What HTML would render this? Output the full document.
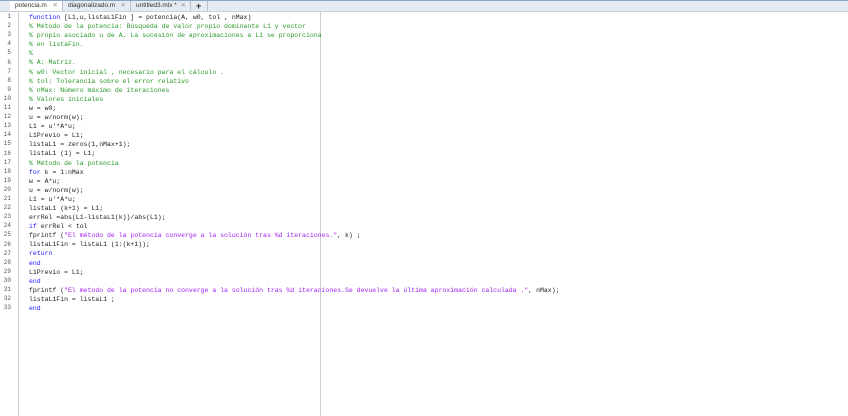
<!DOCTYPE html>
<html><head><meta charset="utf-8"><style>
body{margin:0;width:848px;height:416px;background:#fff;overflow:hidden;position:relative;font-family:"Liberation Mono",monospace}
.tabs{position:absolute;top:0;left:0;width:848px;height:10px;background:#e6ebf2;border-top:1px solid #8aa4c8;border-bottom:1px solid #c9d3df;font-family:"Liberation Sans",sans-serif;font-size:6.5px;color:#333}
.tab{position:absolute;top:0;height:10px;line-height:10px;padding-left:5px;border-right:1px solid #b8c2cf;box-sizing:border-box}
.tab .x{position:absolute;right:4px;color:#999}
.tab.a{background:#fff}
.gut{position:absolute;top:12px;left:0;width:18px;height:404px;border-right:1px solid #ccc}
.ln{position:absolute;left:0;width:11px;text-align:right;font-size:6px;color:#555}
.code{position:absolute;left:29px;top:13px;font-size:6.5px;line-height:9.1px;white-space:pre;color:#222}
.c{color:#2a9a2a}.k{color:#1a1aff}.s{color:#a020f0}
.marg{position:absolute;left:320px;top:12px;width:1px;height:404px;background:#d0d0d0}
</style></head><body>
<div class="tabs">
<div class="tab a" style="left:10px;width:53px">potencia.m<span class="x">✕</span></div>
<div class="tab" style="left:63px;width:68px">diagonalizado.m<span class="x">✕</span></div>
<div class="tab" style="left:131px;width:60px">untitled3.mlx *<span class="x">✕</span></div>
<div class="tab" style="left:191px;width:17px;font-weight:bold;font-size:9px">+</div>
</div>
<div class="gut"></div>
<div class="marg"></div>
<div id="lns"></div>
<div class="code"><span class="k">function</span> [L1,u,listaL1Fin ] = potencia(A, w0, tol , nMax)
<span class="c">% Método de la potencia: Búsqueda de valor propio dominante L1 y vector</span>
<span class="c">% propio asociado u de A. La sucesión de aproximaciones a L1 se proporciona</span>
<span class="c">% en listaFin.</span>
<span class="c">%</span>
<span class="c">% A: Matriz.</span>
<span class="c">% w0: Vector inicial , necesario para el cálculo .</span>
<span class="c">% tol: Tolerancia sobre el error relativo</span>
<span class="c">% nMax: Número máximo de iteraciones</span>
<span class="c">% Valores iniciales</span>
w = w0;
u = w/norm(w);
L1 = u'*A*u;
L1Previo = L1;
listaL1 = zeros(1,nMax+1);
listaL1 (1) = L1;
<span class="c">% Método de la potencia</span>
<span class="k">for</span> k = 1:nMax
w = A*u;
u = w/norm(w);
L1 = u'*A*u;
listaL1 (k+1) = L1;
errRel =abs(L1-listaL1(k))/abs(L1);
<span class="k">if</span> errRel &lt; tol
fprintf (<span class="s">"El método de la potencia converge a la solución tras %d iteraciones."</span>, k) ;
listaL1Fin = listaL1 (1:(k+1));
<span class="k">return</span>
<span class="k">end</span>
L1Previo = L1;
<span class="k">end</span>
fprintf (<span class="s">"El metodo de la potencia no converge a la solución tras %d iteraciones.Se devuelve la última aproximación calculada ."</span>, nMax);
listaL1Fin = listaL1 ;
<span class="k">end</span></div>
<script>
var h='';for(var i=1;i<=33;i++){h+='<div class="ln" style="top:'+(13+(i-1)*9.1)+'px">'+i+'</div>';}
document.getElementById('lns').innerHTML=h;
</script>
</body></html>
